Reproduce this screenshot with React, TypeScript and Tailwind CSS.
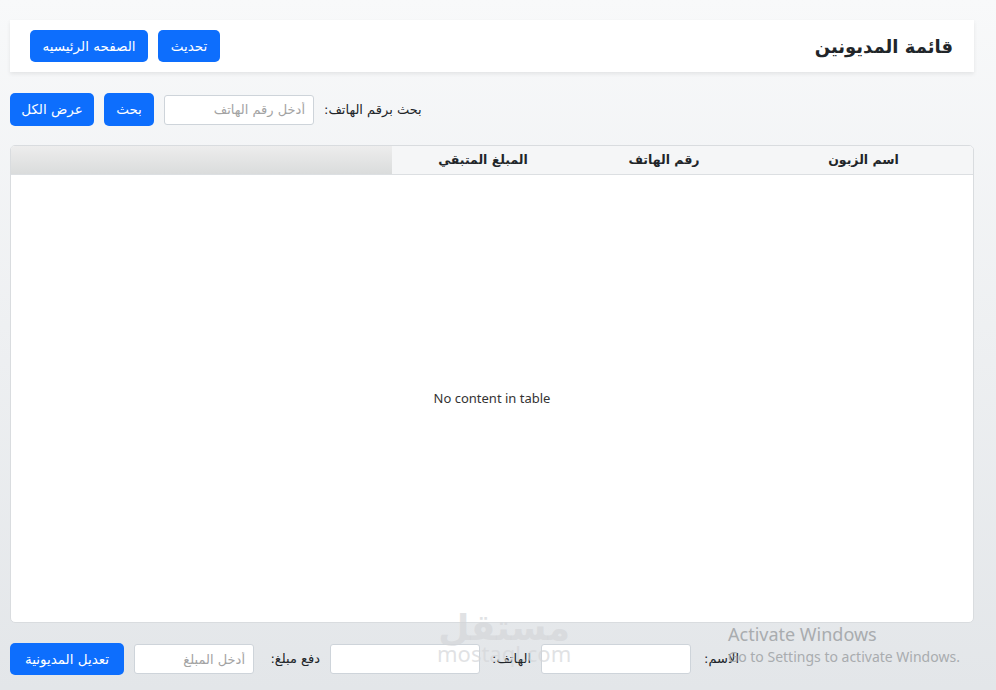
const arabic = { fontFamily: '"DejaVu Sans", "Noto Sans", sans-serif' };

const Btn = ({ children, className = "" }: { children: React.ReactNode; className?: string }) => (
  <button
    className={`h-[32px] rounded-[5px] bg-[#0d6efd] text-[13.5px] text-white ${className}`}
    style={arabic}
  >
    {children}
  </button>
);

const Field = ({ w, placeholder }: { w: string; placeholder?: string }) => (
  <input
    dir="rtl"
    placeholder={placeholder}
    className={`h-[30px] ${w} rounded-[3px] border border-[#ced4da] bg-white px-2 text-[13px] text-[#212529] placeholder:text-[#a3a3a3] outline-none`}
    style={arabic}
  />
);

const Label = ({ children, w = "" }: { children: React.ReactNode; w?: string }) => (
  <span className={`whitespace-nowrap text-[13px] text-[#212529] ${w}`} style={arabic}>
    {children}
  </span>
);

export default function App() {
  return (
    <div
      dir="rtl"
      className="relative h-[690px] w-[996px] overflow-hidden bg-gradient-to-b from-[#f8f9fa] to-[#e3e6e9] pl-[10px] pr-[22px] pt-[20px]"
    >
      <header className="flex h-[52px] items-center justify-between bg-white pl-[20px] pr-[21px] shadow-[0_2px_4px_rgba(0,0,0,0.08)]">
        <h1 className="text-[18px] font-bold text-[#212529]" style={arabic}>
          قائمة المديونين
        </h1>
        <div className="flex gap-[10px]">
          <Btn className="w-[62px]">تحديث</Btn>
          <Btn className="w-[118px]">الصفحه الرئيسيه</Btn>
        </div>
      </header>

      <div className="mt-[21px] flex h-[33px] items-center justify-end gap-[10px]">
        <Label>بحث برقم الهاتف:</Label>
        <Field w="w-[150px]" placeholder="أدخل رقم الهاتف" />
        <Btn className="h-[33px] w-[50px]">بحث</Btn>
        <Btn className="h-[33px] w-[84px]">عرض الكل</Btn>
      </div>

      <div className="mt-[19px] flex h-[478px] flex-col overflow-hidden rounded-[5px] border border-[#d9dcdf] bg-white">
        <div className="flex h-[29px] shrink-0 border-b border-[#dcdfe2] bg-[#f5f6f7] text-[12.5px] font-bold text-[#212529]" style={arabic}>
          <div className="flex w-[219px] items-center justify-center">اسم الزبون</div>
          <div className="flex w-[180px] items-center justify-center">رقم الهاتف</div>
          <div className="flex w-[182px] items-center justify-center">المبلغ المتبقي</div>
          <div className="flex-1 bg-gradient-to-b from-[#ededed] to-[#dadcdc]" />
        </div>
        <div className="flex flex-1 items-center justify-center">
          <span dir="ltr" className="text-[13px] text-[#333]" style={{ fontFamily: '"Noto Sans", "Open Sans", sans-serif' }}>
            No content in table
          </span>
        </div>
      </div>

      <div className="mt-[20px] flex h-[32px] items-center justify-end gap-[10px]">
        <Label w="w-[38px]">الاسم:</Label>
        <Field w="w-[150px]" />
        <Label w="w-[41px]">الهاتف:</Label>
        <Field w="w-[150px]" />
        <Label w="w-[56px]">دفع مبلغ:</Label>
        <Field w="w-[120px]" placeholder="أدخل المبلغ" />
        <Btn className="w-[114px]">تعديل المديونية</Btn>
      </div>

      <div className="pointer-events-none absolute left-[437px] top-[610px] flex flex-col items-center leading-none text-[#d4d6d9]/70">
        <span className="text-[36px] font-bold" style={arabic}>مستقل</span>
        <span dir="ltr" className="-mt-[4px] text-[22px]" style={{ fontFamily: '"Noto Sans", sans-serif' }}>mostaql.com</span>
      </div>

      <div dir="ltr" className="pointer-events-none absolute left-[728px] top-[622px] text-[#a9acaf]" style={{ fontFamily: '"Noto Sans", "Open Sans", sans-serif' }}>
        <div className="text-[18px] leading-[24px]">Activate Windows</div>
        <div className="mt-[1px] text-[14px] leading-[20px]">Go to Settings to activate Windows.</div>
      </div>
    </div>
  );
}
